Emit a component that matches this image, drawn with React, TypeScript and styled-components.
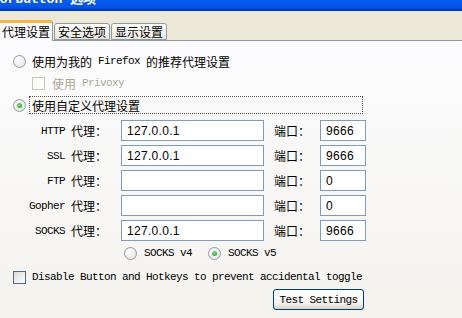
import { Fragment } from "react";
import styled, { createGlobalStyle } from "styled-components";

const Global = createGlobalStyle`
  html, body {
    margin: 0;
    width: 462px;
    height: 318px;
    overflow: hidden;
    background: #ECE9D8;
  }
  body {
    font-family: "Noto Sans CJK SC", "Liberation Sans", sans-serif;
    font-size: 12px;
    color: #000;
  }
`;

const Window = styled.div`
  width: 462px;
  height: 318px;
  display: flex;
  flex-direction: column;
  overflow: hidden;
`;

const TitleBar = styled.div`
  height: 11px;
  flex: none;
  overflow: hidden;
  background: linear-gradient(#0A5CEC, #0055EA 60%, #0040C0 90%, #00309A);
`;

const TitleText = styled.div`
  margin: -7px 0 0 -8px;
  font-family: "Liberation Mono", "Noto Sans CJK SC", monospace;
  font-weight: bold;
  font-size: 13px;
  line-height: 13px;
  color: #fff;
  white-space: nowrap;
`;

const TabStrip = styled.div`
  height: 29px;
  flex: none;
  display: flex;
  align-items: flex-end;
  gap: 1px;
  margin-left: -5px;
  background: #ECE9D8;
`;

const Tab = styled.div<{ $active?: boolean }>`
  box-sizing: border-box;
  height: ${p => (p.$active ? "21px" : "17px")};
  padding: ${p => (p.$active ? "0 2px 0 6px" : "0 3px")};
  margin-bottom: ${p => (p.$active ? "-1px" : "0")};
  position: relative;
  z-index: ${p => (p.$active ? 2 : 0)};
  display: flex;
  align-items: center;
  font-size: 12px;
  line-height: 12px;
  border: 1px solid #919B9C;
  border-bottom: ${p => (p.$active ? "none" : "1px solid #919B9C")};
  border-top: ${p => (p.$active ? "3px solid #F5B547" : "1px solid #919B9C")};
  border-radius: 3px 3px 0 0;
  background: ${p =>
    p.$active ? "#FCFCFE" : "linear-gradient(#FFFFFF, #F3F2EE 60%, #E8E7E0)"};
`;

const Panel = styled.div`
  flex: 1;
  border-top: 1px solid #919B9C;
  background: linear-gradient(#FCFCFE, #F4F3EE);
  padding: 11px 0 0 13px;
  display: flex;
  flex-direction: column;
`;

// SimSun-like half-width latin: 6px per character
const Lat = styled.span`
  font-family: "Liberation Mono", monospace;
  font-size: 11px;
  letter-spacing: -0.6px;
  white-space: pre;
`;

const OptionRow = styled.div<{ $indent?: number; $gap?: number; $top?: number }>`
  height: 18px;
  display: flex;
  align-items: center;
  gap: ${p => p.$gap ?? 3}px;
  margin-left: ${p => p.$indent ?? 0}px;
  margin-top: ${p => p.$top ?? 4}px;
`;

const Radio = styled.span<{ $checked?: boolean }>`
  width: 13px;
  height: 13px;
  box-sizing: border-box;
  flex: none;
  border-radius: 50%;
  border: 1px solid #8E9CAC;
  background: radial-gradient(circle at 35% 35%, #FFFFFF, #DFDED7);
  display: inline-flex;
  align-items: center;
  justify-content: center;
  &::after {
    content: "";
    width: 5px;
    height: 5px;
    border-radius: 50%;
    background: radial-gradient(circle at 40% 40%, #7BE27B, #1F951F);
    display: ${p => (p.$checked ? "block" : "none")};
  }
`;

const Check = styled.span<{ $disabled?: boolean }>`
  width: 13px;
  height: 13px;
  box-sizing: border-box;
  flex: none;
  border: 1px solid ${p => (p.$disabled ? "#CAC8BB" : "#4E6A88")};
  background: ${p =>
    p.$disabled ? "#FBFBF8" : "linear-gradient(135deg, #DCDBD4, #FFFFFF)"};
`;

const Label = styled.span<{ $focus?: boolean; $disabled?: boolean; $width?: number; $pad?: number }>`
  box-sizing: border-box;
  height: 18px;
  display: flex;
  align-items: center;
  padding-left: ${p => p.$pad ?? 2}px;
  width: ${p => (p.$width ? `${p.$width}px` : "auto")};
  border: 1px dotted ${p => (p.$focus ? "#555" : "transparent")};
  color: ${p => (p.$disabled ? "#ACA899" : "#000")};
  white-space: nowrap;
`;

const Form = styled.div`
  display: grid;
  grid-template-columns: 108px 153px 46px 46px;
  grid-auto-rows: 21px;
  row-gap: 4px;
  margin-top: 6px;
`;

const FieldLabel = styled.div<{ $align?: "left" | "right" }>`
  display: flex;
  align-items: center;
  justify-content: ${p => (p.$align === "left" ? "flex-start" : "flex-end")};
  padding-right: ${p => (p.$align === "left" ? "0" : "14px")};
  white-space: nowrap;
`;

const Input = styled.div<{ $width: number }>`
  box-sizing: border-box;
  width: ${p => p.$width}px;
  height: 21px;
  border: 1px solid #7F9DB9;
  background: #fff;
  padding-left: 5px;
  display: flex;
  align-items: center;
  font-family: "Liberation Sans", sans-serif;
  font-size: 12px;
  letter-spacing: 0.3px;
`;

const SocksRow = styled.div`
  height: 18px;
  margin: 3px 0 0 111px;
  display: flex;
  align-items: center;
`;

const SocksOption = styled.span`
  display: flex;
  align-items: center;
  gap: 7px;
  margin-right: 16px;
`;

const ButtonRow = styled.div`
  margin: 3px 0 0 260px;
`;

const Button = styled.div`
  box-sizing: border-box;
  width: 91px;
  height: 21px;
  border: 1px solid #003C74;
  border-radius: 3px;
  background: linear-gradient(#FFFFFF, #F4F3EE 70%, #D8D3C8);
  display: flex;
  align-items: center;
  justify-content: center;
`;

const proxies = [
  { name: "HTTP", host: "127.0.0.1", port: "9666" },
  { name: "SSL", host: "127.0.0.1", port: "9666" },
  { name: "FTP", host: "", port: "0" },
  { name: "Gopher", host: "", port: "0" },
  { name: "SOCKS", host: "127.0.0.1", port: "9666" },
];

function App() {
  return (
    <Window>
      <Global />
      <TitleBar>
        <TitleText>Torbutton 选项</TitleText>
      </TitleBar>
      <TabStrip>
        <Tab $active>代理设置</Tab>
        <Tab>安全选项</Tab>
        <Tab>显示设置</Tab>
      </TabStrip>
      <Panel>
        <OptionRow $top={0}>
          <Radio />
          <Label>
            使用为我的<Lat> Firefox </Lat>的推荐代理设置
          </Label>
        </OptionRow>
        <OptionRow $indent={19} $gap={6}>
          <Check $disabled />
          <Label $disabled $pad={0}>
            使用<Lat> Privoxy</Lat>
          </Label>
        </OptionRow>
        <OptionRow>
          <Radio $checked />
          <Label $focus $width={334}>使用自定义代理设置</Label>
        </OptionRow>
        <Form>
          {proxies.map(p => (
            <Fragment key={p.name}>
              <FieldLabel>
                <Lat>{p.name} </Lat>代理：
              </FieldLabel>
              <Input $width={143}>{p.host}</Input>
              <FieldLabel $align="left">端口：</FieldLabel>
              <Input $width={46}>{p.port}</Input>
            </Fragment>
          ))}
        </Form>
        <SocksRow>
          <SocksOption>
            <Radio />
            <Lat>SOCKS v4</Lat>
          </SocksOption>
          <SocksOption>
            <Radio $checked />
            <Lat>SOCKS v5</Lat>
          </SocksOption>
        </SocksRow>
        <OptionRow $gap={6} $top={6}>
          <Check />
          <Lat>Disable Button and Hotkeys to prevent accidental toggle</Lat>
        </OptionRow>
        <ButtonRow>
          <Button>
            <Lat>Test Settings</Lat>
          </Button>
        </ButtonRow>
      </Panel>
    </Window>
  );
}

export default App;
